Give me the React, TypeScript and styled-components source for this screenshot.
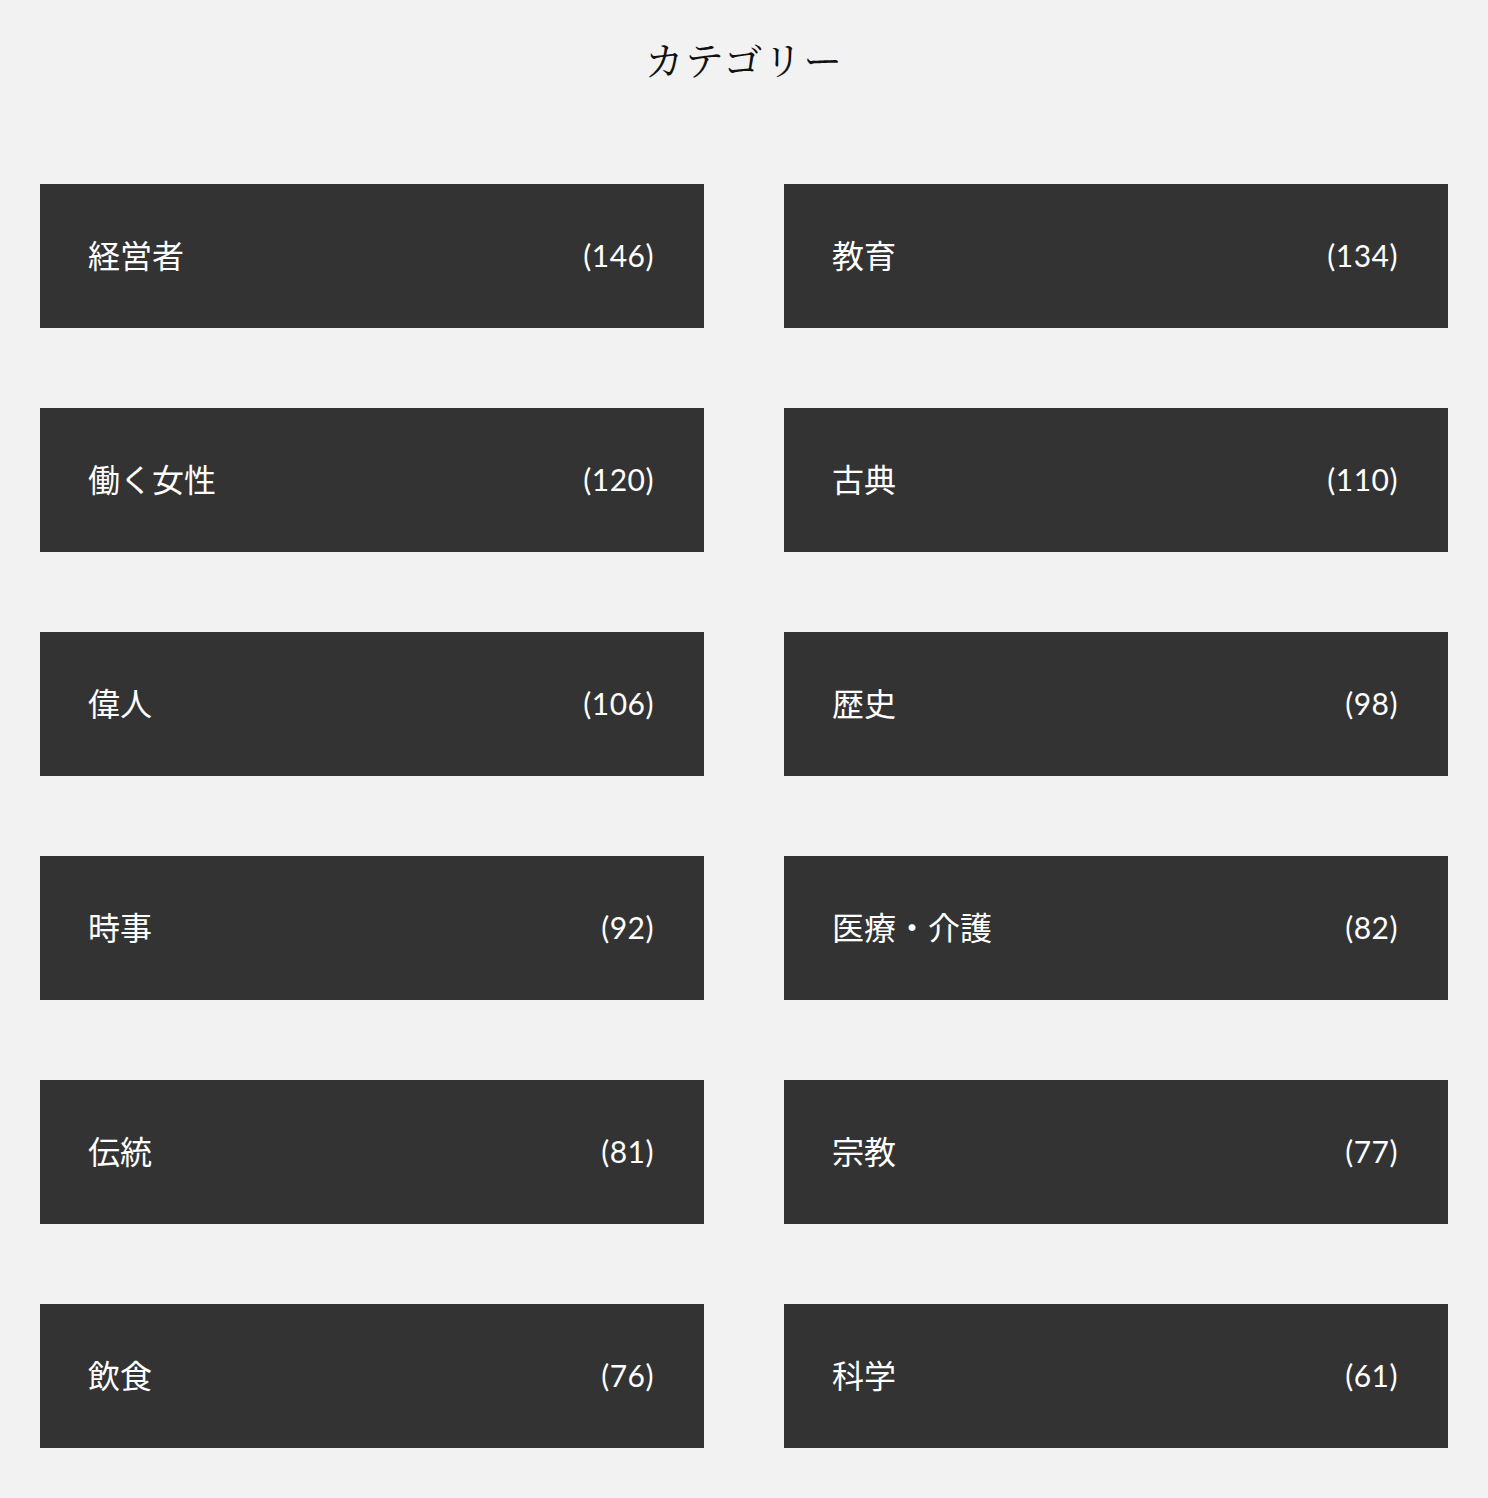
import styled, { createGlobalStyle } from "styled-components";

const GlobalStyle = createGlobalStyle`
  html, body {
    margin: 0;
    padding: 0;
    background: #f2f2f2;
  }
  * {
    box-sizing: border-box;
  }
`;

const Page = styled.div`
  padding: 28px 40px 50px;
  background: #f2f2f2;
`;

const Title = styled.h2`
  margin: 0 0 96px;
  height: 60px;
  line-height: 60px;
  text-align: center;
  font-family: "Noto Serif CJK JP", "IPAMincho", "Liberation Serif", "Noto Sans CJK JP", serif;
  font-weight: 400;
  font-size: 39px;
  letter-spacing: 1px;
  color: #111;
`;

const Grid = styled.div`
  display: grid;
  grid-template-columns: repeat(2, 1fr);
  column-gap: 80px;
  row-gap: 80px;
`;

const Card = styled.a`
  display: flex;
  align-items: center;
  justify-content: space-between;
  height: 144px;
  padding: 0 50px 5px 48px;
  background: #333333;
  color: #fff;
  text-decoration: none;
  cursor: pointer;
`;

const Label = styled.span`
  font-family: "Noto Sans CJK JP", "Noto Sans", sans-serif;
  font-size: 32px;
  letter-spacing: 0;
`;

const Count = styled.span`
  font-family: "Lato", "Noto Sans", sans-serif;
  font-size: 30px;
  letter-spacing: 0.5px;
  margin-top: 3px;
`;

type Category = {
  name: string;
  count: number;
};

const categories: Category[] = [
  { name: "経営者", count: 146 },
  { name: "教育", count: 134 },
  { name: "働く女性", count: 120 },
  { name: "古典", count: 110 },
  { name: "偉人", count: 106 },
  { name: "歴史", count: 98 },
  { name: "時事", count: 92 },
  { name: "医療・介護", count: 82 },
  { name: "伝統", count: 81 },
  { name: "宗教", count: 77 },
  { name: "飲食", count: 76 },
  { name: "科学", count: 61 },
];

const App = () => {
  return (
    <>
      <GlobalStyle />
      <Page>
        <Title>カテゴリー</Title>
        <Grid>
          {categories.map((c) => (
            <Card key={c.name}>
              <Label>{c.name}</Label>
              <Count>({c.count})</Count>
            </Card>
          ))}
        </Grid>
      </Page>
    </>
  );
};

export default App;
